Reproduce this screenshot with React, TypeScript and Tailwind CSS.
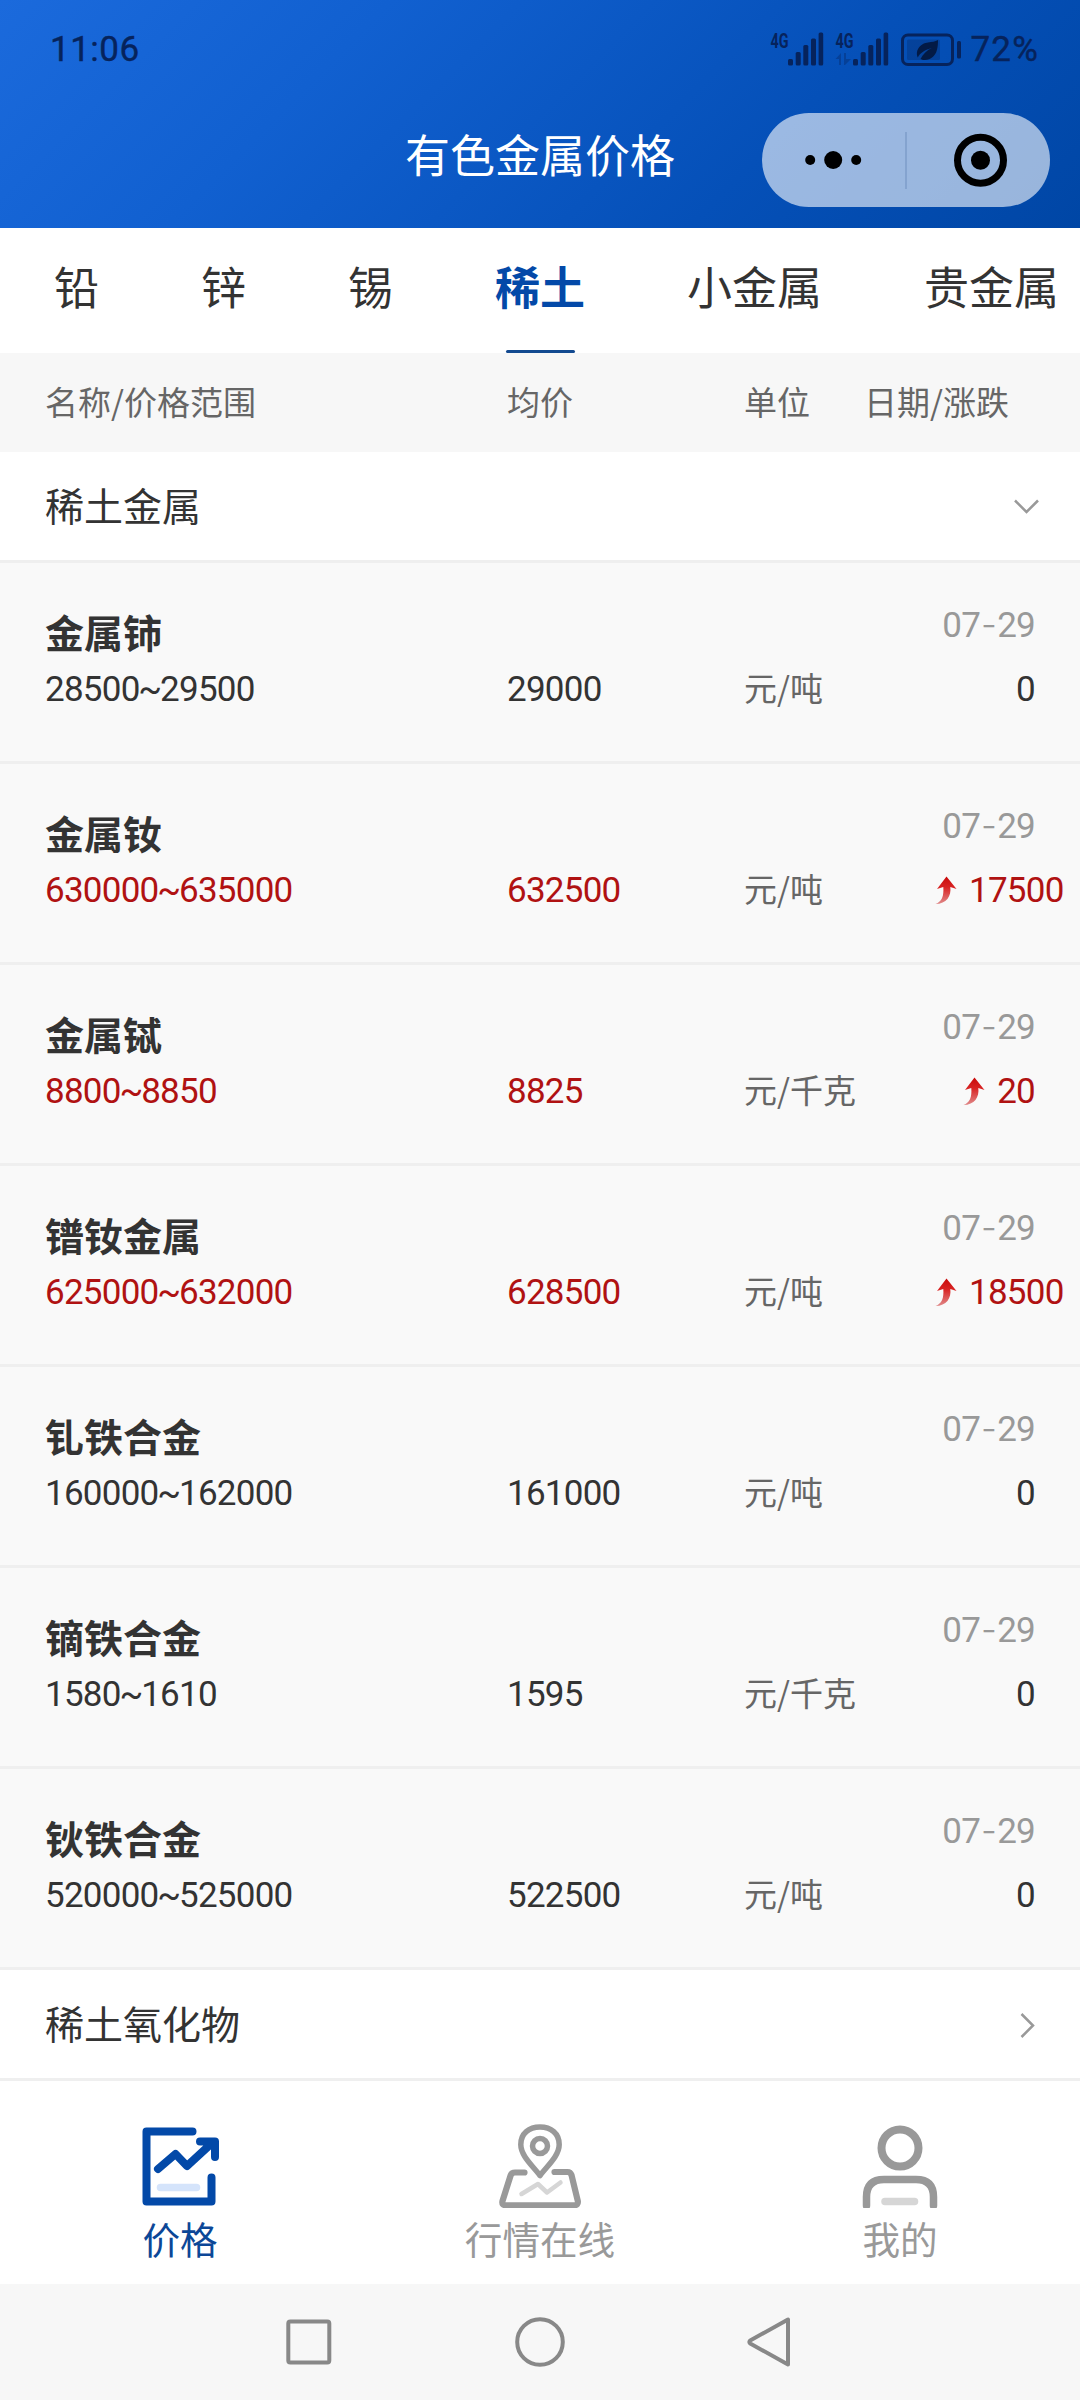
import React, { useState } from 'react';

type Metal = {
  name: string;
  range: string;
  average: string;
  unit: string;
  date: string;
  change: number;
};

const tabs = ['铅', '锌', '锡', '稀土', '小金属', '贵金属'];

const metals: Metal[] = [
  { name: '金属铈', range: '28500~29500', average: '29000', unit: '元/吨', date: '07-29', change: 0 },
  { name: '金属钕', range: '630000~635000', average: '632500', unit: '元/吨', date: '07-29', change: 17500 },
  { name: '金属铽', range: '8800~8850', average: '8825', unit: '元/千克', date: '07-29', change: 20 },
  { name: '镨钕金属', range: '625000~632000', average: '628500', unit: '元/吨', date: '07-29', change: 18500 },
  { name: '钆铁合金', range: '160000~162000', average: '161000', unit: '元/吨', date: '07-29', change: 0 },
  { name: '镝铁合金', range: '1580~1610', average: '1595', unit: '元/千克', date: '07-29', change: 0 },
  { name: '钬铁合金', range: '520000~525000', average: '522500', unit: '元/吨', date: '07-29', change: 0 },
];

function SignalIcon({ data }: { data?: boolean }) {
  return (
    <svg width="54" height="52" viewBox="0 -8 54 52" fill="#06235c">
      <text x="0.500" y="15.500" fontSize="21" fontWeight="700" fontFamily="Roboto, sans-serif" textLength="18" lengthAdjust="spacingAndGlyphs">4G</text>
      {data && (
        <g opacity="0.35">
          <path d="M0.500 27L6 21V33H4V27Z" />
          <path d="M9 21H11V27H16L10 33H9Z" />
        </g>
      )}
      <rect x="18" y="27" width="5" height="6.500" rx="1.500" />
      <rect x="25.700" y="20" width="5" height="13.500" rx="1.500" />
      <rect x="33.300" y="13" width="5" height="20.500" rx="1.500" />
      <rect x="41" y="6.500" width="5" height="27" rx="1.500" />
      <rect x="48.600" y="0.500" width="4.600" height="33" rx="1.500" />
    </svg>
  );
}

function BatteryIcon() {
  return (
    <svg width="61" height="34" viewBox="0 0 61 34" fill="none">
      <rect x="1.500" y="2" width="50" height="29.500" rx="5.500" stroke="#06235c" strokeWidth="3" />
      <rect x="6" y="6.500" width="33" height="20.500" rx="1.500" fill="#06235c" fillOpacity="0.3" />
      <path d="M37 7C37 15 36 26 24 27C21.500 27 20.500 26.500 19.500 26C22 21 26 17 31 15C24 16.500 19 20 16.800 24.500C13.500 16 21 10 27 9.500C31 9 34 8.500 37 7Z" fill="#031a45" />
      <rect x="56" y="8" width="4" height="17.500" rx="1.500" fill="#06235c" />
    </svg>
  );
}

function UpArrow() {
  return (
    <svg width="22" height="28" viewBox="0 0 22 28" className="shrink-0">
      <defs>
        <linearGradient id="up" x1="0" y1="0" x2="0" y2="1">
          <stop offset="0" stopColor="#c80a0a" />
          <stop offset="0.4" stopColor="#d92424" />
          <stop offset="1" stopColor="#e08a8a" />
        </linearGradient>
      </defs>
      <path d="M11.500 0.500L21.500 13L15.300 11C16.500 20 11.500 28 0.500 28C7 25.500 9 20 8.300 11L2 13Z" fill="url(#up)" />
    </svg>
  );
}

function PriceIcon() {
  return (
    <svg width="84" height="88" viewBox="0 0 84 88" fill="none" strokeLinecap="round" strokeLinejoin="round">
      <path d="M54.500 11.500H8.500V81.500H73.500V57.500" stroke="#0349a8" strokeWidth="8" />
      <path d="M20 49L37.500 34L49 46L74 23M62 21.500H77V37" stroke="#0349a8" strokeWidth="8" />
      <path d="M22.500 67.500H58.500" stroke="#d5e4fb" strokeWidth="7.500" />
    </svg>
  );
}

function MapIcon() {
  return (
    <svg width="84" height="88" viewBox="0 0 84 88" fill="none" strokeLinecap="round" strokeLinejoin="round">
      <path d="M42 55.500C35 46 22.800 36 22.800 24.500C22.800 13.500 31 7 42 7C53 7 61.200 13.500 61.200 24.500C61.200 36 49 46 42 55.500Z" stroke="#999" strokeWidth="5.500" />
      <circle cx="42" cy="26" r="7.500" stroke="#999" strokeWidth="5.500" />
      <path d="M26.500 52.500H17Q13.500 52.500 12.600 55.500L4.500 81Q3.500 85.300 8 85.300H76Q80.500 85.300 79.800 81L73.500 55Q72.500 52 69.500 52H56.500" stroke="#999" strokeWidth="6.200" />
      <path d="M23.500 74L40 64L49 72.500L62.500 62.500" stroke="#d6d6d6" strokeWidth="4.500" />
    </svg>
  );
}

function UserIcon() {
  return (
    <svg width="84" height="88" viewBox="0 0 84 88" fill="none" strokeLinecap="round" strokeLinejoin="round">
      <circle cx="42" cy="28" r="18.500" stroke="#999" strokeWidth="8" />
      <path d="M8.500 85.500V77Q8.500 59.500 26 59.500H58Q75.500 59.500 75.500 77V85.500" stroke="#999" strokeWidth="7.500" />
      <path d="M27 81.500H56.500" stroke="#d6d6d6" strokeWidth="7.500" />
    </svg>
  );
}

// digits are a bit narrower than the font gives, "~" and "-" get their own width
function Digits({ value }: { value: string }) {
  return (
    <span className="font-[Roboto,sans-serif] text-[35px] tracking-[-0.75px]">
      {value.split(/([~-])/).map((part, i) => (
        <span key={i} className={part === '~' ? '-mx-[1.3px]' : part === '-' ? 'px-[1px] font-[Inter,sans-serif] font-light' : ''}>{part}</span>
      ))}
    </span>
  );
}

function MetalRow({ metal }: { metal: Metal }) {
  const rising = metal.change > 0;
  const color = rising ? 'text-[#b01212]' : 'text-[#333]';

  return (
    <div className="flex h-[201px] border-b-[3px] border-[#efefef] bg-[#f9f9f9] px-[45px] leading-none whitespace-nowrap">
      <div className={`w-[462px] pt-[49px] ${color}`}>
        <div className="h-[60px] text-[39px] font-bold leading-[39px] text-[#333]">{metal.name}</div>
        <div className="leading-[36px]"><Digits value={metal.range} /></div>
      </div>
      <div className={`w-[237px] pt-[109px] leading-[36px] ${color}`}><Digits value={metal.average} /></div>
      <div className="w-[144px] pt-[106px] text-[33px] leading-[36px] text-[#666]">{metal.unit}</div>
      <div className="w-[147px] pt-[43px] text-right">
        <div className="h-[66px] leading-[36px] text-[#999]"><Digits value={metal.date} /></div>
        <div className={`ml-auto flex w-[100px] leading-[36px] ${metal.change < 1000 ? 'justify-end' : ''} ${color}`}>
          {rising && <div className="mr-[12px] flex items-center pb-[2px]"><UpArrow /></div>}
          <Digits value={String(metal.change)} />
        </div>
      </div>
    </div>
  );
}

export default function App() {
  const [activeTab, setActiveTab] = useState('稀土');

  return (
    <div className="flex h-[2400px] w-[1080px] flex-col overflow-hidden bg-white font-['Noto_Sans_CJK_SC',sans-serif] text-[#333]">
      <header className="h-[228px] bg-linear-[135deg,#1b6adc_0%,#1160d0_30%,#0550b8_70%,#0046a5_100%]">
        <div className="flex h-[98px] items-center justify-between pt-[2px] pr-[41px] pl-[50px] font-[Roboto,sans-serif] text-[35px] text-[#06235c] [-webkit-text-stroke:0.4px]">
          <span className="tracking-[0.5px]">11:06</span>
          <div className="flex items-center">
            <SignalIcon />
            <div className="ml-[11px]"><SignalIcon data /></div>
            <div className="ml-[12px]"><BatteryIcon /></div>
            <span className="ml-[8px] tracking-[1.2px]">72%</span>
          </div>
        </div>
        <div className="grid grid-cols-[1fr_auto_1fr] items-center pt-[15px]">
          <div />
          <h1 className="-mt-[14px] text-[45px] leading-none text-white">有色金属价格</h1>
          <div className="mr-[30px] flex h-[94px] w-[288px] items-center justify-self-end rounded-full bg-white/60">
            <svg width="288" height="94" viewBox="0 0 288 94">
              <circle cx="48.200" cy="47" r="5" />
              <circle cx="71.200" cy="47" r="9" />
              <circle cx="94.200" cy="47" r="5" />
              <path d="M144 19V76" stroke="#84a3cf" strokeWidth="2" />
              <circle cx="218.500" cy="47.300" r="23" fill="none" stroke="#000" strokeWidth="7" />
              <circle cx="218.500" cy="47.300" r="9.500" />
            </svg>
          </div>
        </div>
      </header>

      <nav className="flex h-[125px] shrink-0 overflow-hidden pl-[3px]">
        {tabs.map((tab) => (
          <button
            key={tab}
            onClick={() => setActiveTab(tab)}
            className={`flex h-[125px] shrink-0 flex-col items-center justify-between px-[51px] pt-[35px] text-[45px] leading-[45px] ${tab === activeTab ? 'font-bold text-[#0349a8]' : ''}`}
          >
            {tab}
            {tab === activeTab && <div className="h-[3px] w-[69px] rounded-full bg-[#134a90]" />}
          </button>
        ))}
      </nav>

      <div className="flex h-[99px] shrink-0 items-center bg-[#f7f7f7] px-[45px] pb-[1px] text-[33px] text-[#666]">
        <div className="w-[462px]">名称/价格范围</div>
        <div className="w-[237px]">均价</div>
        <div className="w-[120px]">单位</div>
        <div>日期/涨跌</div>
      </div>

      <div className="flex h-[111px] shrink-0 items-center justify-between border-b-[3px] border-[#efefef] pr-[41px] pl-[45px] text-[39px]">
        <span className="-mt-[4px]">稀土金属</span>
        <svg width="25" height="15" viewBox="0 0 25 15" fill="none" stroke="#999" strokeWidth="2.500">
          <path d="M1 1.500L12.500 13L24 1.500" />
        </svg>
      </div>

      {metals.map((metal) => <MetalRow key={metal.name} metal={metal} />)}

      <div className="flex h-[111px] shrink-0 items-center justify-between border-b-[3px] border-[#efefef] pr-[45px] pl-[45px] text-[39px]">
        <span className="-mt-[4px]">稀土氧化物</span>
        <svg width="15" height="25" viewBox="0 0 15 25" fill="none" stroke="#999" strokeWidth="2.500" className="mt-[2px]">
          <path d="M1.500 1L13 12.500L1.500 24" />
        </svg>
      </div>

      <footer className="grid h-[203px] shrink-0 grid-cols-3 pt-[39px] text-[37.600px] leading-[46px] text-[#999]">
        <div className="flex flex-col items-center text-[#0c4797]">
          <PriceIcon />
          <span className="mt-[7px]">价格</span>
        </div>
        <div className="flex flex-col items-center">
          <MapIcon />
          <span className="mt-[7px]">行情在线</span>
        </div>
        <div className="flex flex-col items-center">
          <UserIcon />
          <span className="mt-[7px]">我的</span>
        </div>
      </footer>

      {/* system navigation */}
      <div className="flex h-[116px] shrink-0 items-center justify-center gap-[180px] bg-[#f7f7f7]">
        <svg width="50" height="50" viewBox="0 0 50 50" fill="none" stroke="#888" strokeWidth="4">
          <rect x="3.300" y="4.400" width="41" height="41" rx="2" />
        </svg>
        <svg width="50" height="50" viewBox="0 0 50 50" fill="none" stroke="#888" strokeWidth="4">
          <circle cx="25" cy="25" r="22.800" />
        </svg>
        <svg width="50" height="50" viewBox="0 0 50 50" fill="none" stroke="#888" strokeWidth="4" strokeLinejoin="round">
          <path d="M43 2.500V47.500L5.200 26.500Q3.700 25 5.200 23.500Z" />
        </svg>
      </div>
    </div>
  );
}
